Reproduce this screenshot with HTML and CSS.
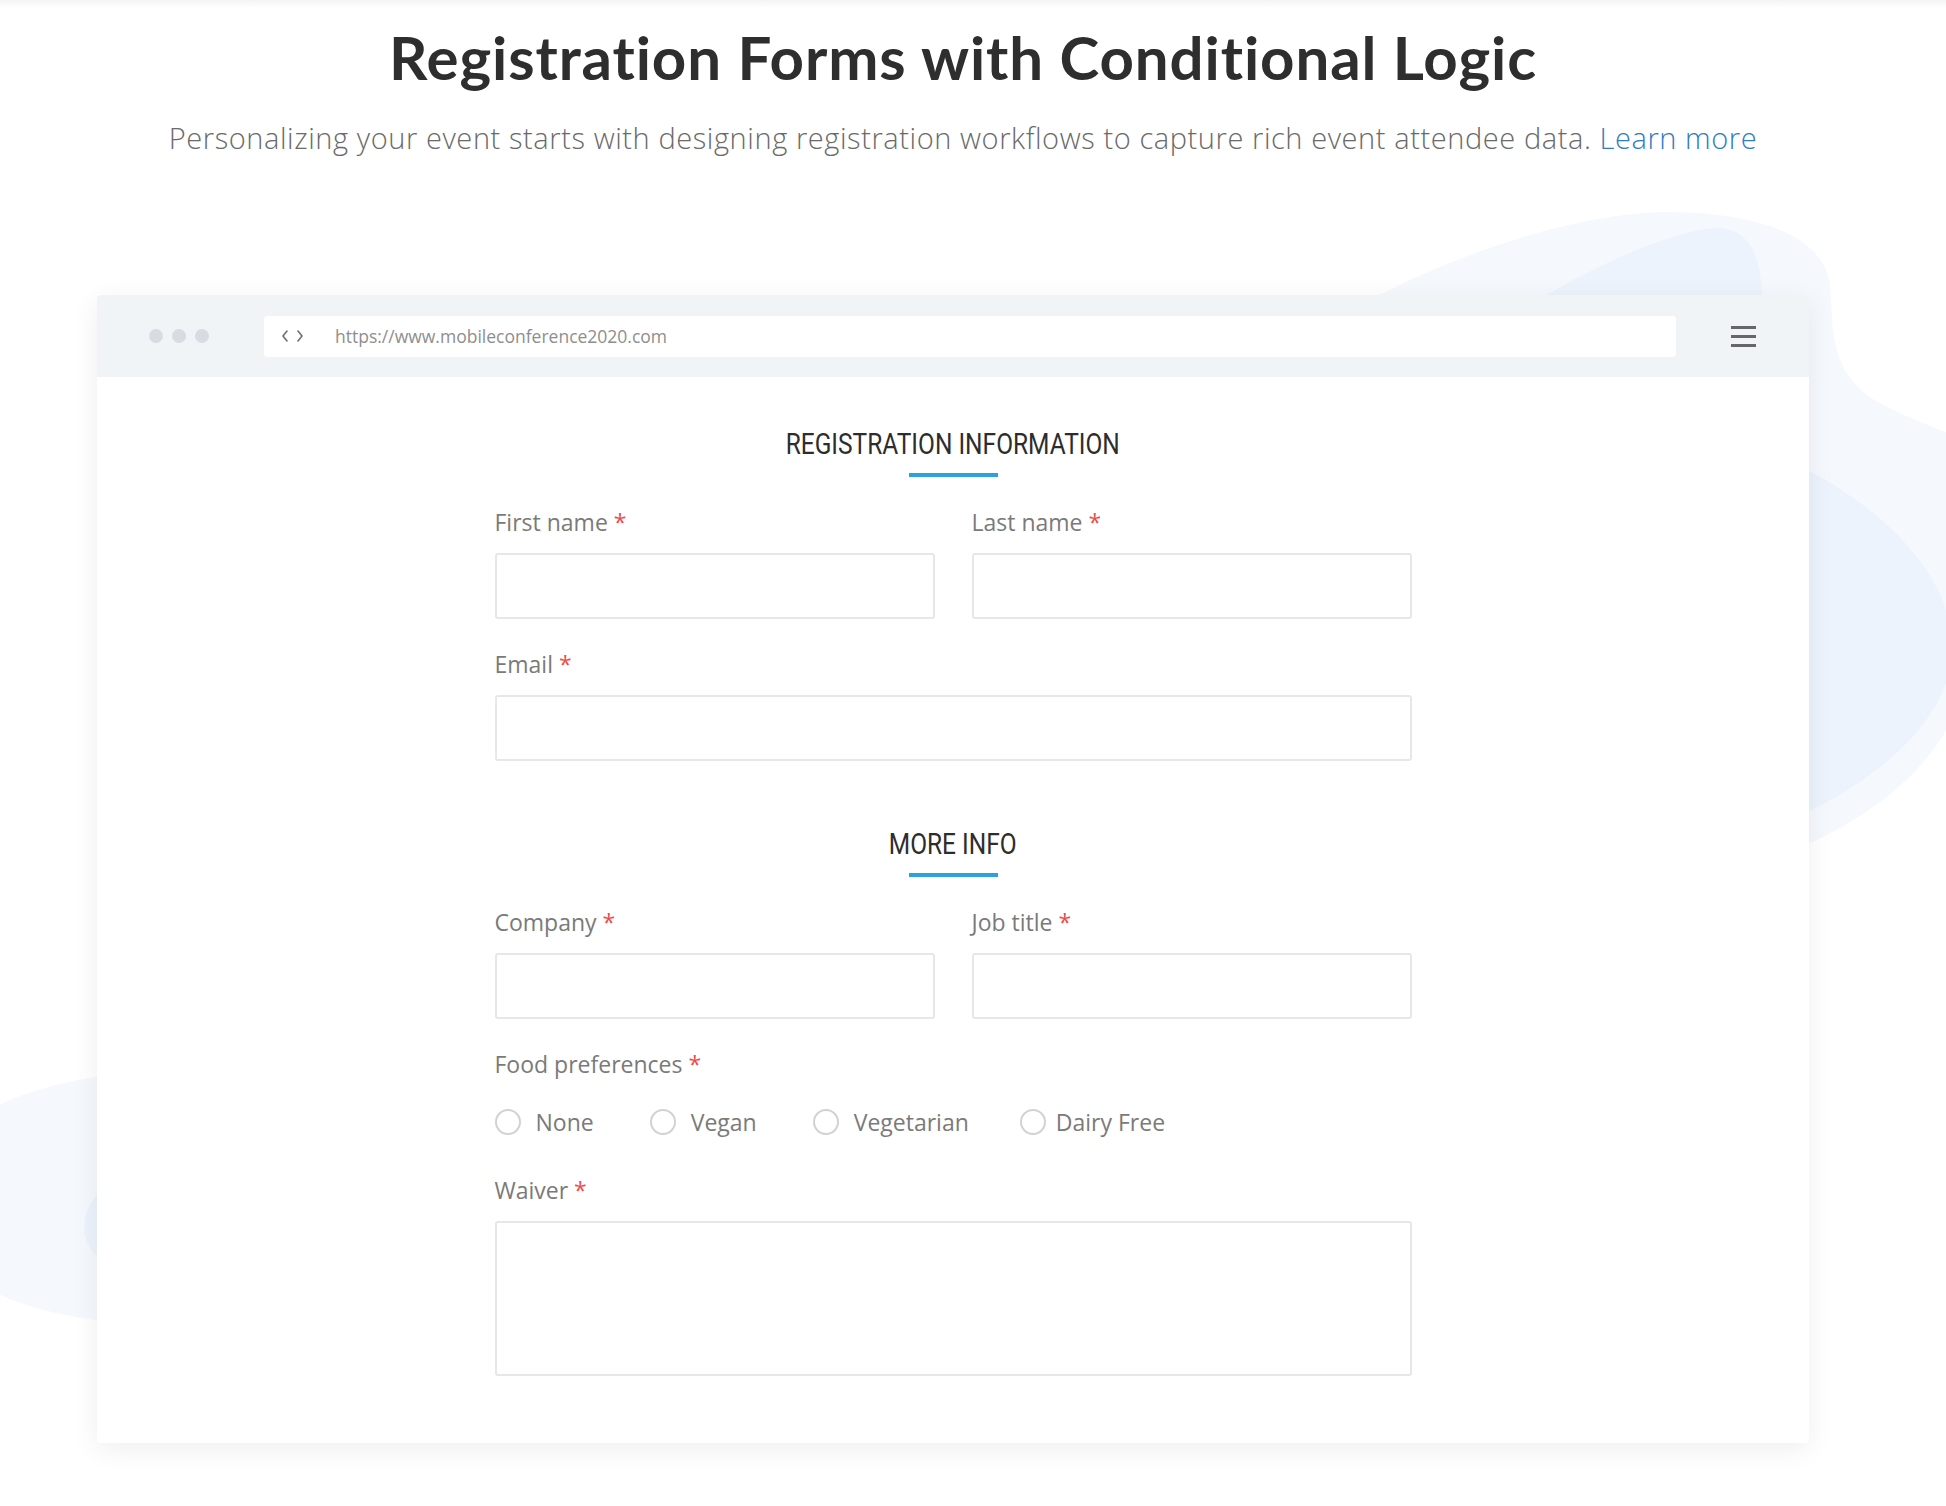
FILE: index.html
```html
<!DOCTYPE html>
<html lang="en">
<head>
<meta charset="utf-8">
<title>Registration Forms with Conditional Logic</title>
<link rel="stylesheet" href="styles.css">
</head>
<body>
<div class="page">
  <svg class="blobs" width="1946" height="1506" viewBox="0 0 1946 1506" aria-hidden="true">
    <path class="blob-outer" d="M1370 300 C1460 252 1580 212 1670 212 C1760 213 1824 236 1830 285 C1834 330 1828 372 1878 402 C1910 420 1946 430 1960 440 L1960 700 C1940 760 1880 815 1790 852 Z"/>
    <path class="blob-inner" d="M1538 300 C1600 262 1680 228 1720 228 C1752 230 1762 262 1762 300 Z"/>
    <path class="blob-inner" d="M1800 466 C1872 502 1952 568 1952 648 C1952 722 1872 782 1800 816 Z"/>
    <path class="blob-outer" d="M130 1072 C60 1080 12 1096 -10 1110 L-10 1290 C20 1305 60 1318 130 1324 Z"/>
    <path class="blob-inner" d="M120 1176 C96 1190 84 1208 84 1227 C84 1246 96 1260 120 1270 Z"/>
  </svg>

  <header class="intro">
    <h1 class="title">Registration Forms with Conditional Logic</h1>
    <p class="lead">Personalizing your event starts with designing registration workflows to capture rich event attendee data. <a class="lead-link" href="#">Learn more</a></p>
  </header>

  <div class="browser">
    <div class="browser-bar">
      <div class="dots"><span class="dot"></span><span class="dot"></span><span class="dot"></span></div>
      <div class="url">
        <svg class="nav-arrows" width="22" height="12" viewBox="0 0 22 12" aria-hidden="true">
          <path d="M5 1 L1 6 L5 11" />
          <path d="M16 1 L20 6 L16 11" />
        </svg>
        <span class="url-text">https://www.mobileconference2020.com</span>
      </div>
      <div class="menu"><span class="menu-line"></span><span class="menu-line"></span><span class="menu-line"></span></div>
    </div>

    <div class="browser-body">
      <form class="form">
        <h2 class="section-title"><span class="section-text">REGISTRATION INFORMATION</span></h2>
        <div class="rule"></div>

        <div class="row">
          <div class="field">
            <label class="label">First name <span class="req">*</span></label>
            <input class="input" type="text">
          </div>
          <div class="field">
            <label class="label">Last name <span class="req">*</span></label>
            <input class="input" type="text">
          </div>
        </div>

        <div class="field field-gap">
          <label class="label">Email <span class="req">*</span></label>
          <input class="input" type="text">
        </div>

        <h2 class="section-title section-second"><span class="section-text">MORE INFO</span></h2>
        <div class="rule"></div>

        <div class="row">
          <div class="field">
            <label class="label">Company <span class="req">*</span></label>
            <input class="input" type="text">
          </div>
          <div class="field">
            <label class="label">Job title <span class="req">*</span></label>
            <input class="input" type="text">
          </div>
        </div>

        <div class="field field-gap">
          <label class="label">Food preferences <span class="req">*</span></label>
          <div class="options">
            <label class="option"><span class="radio"></span>None</label>
            <label class="option"><span class="radio"></span>Vegan</label>
            <label class="option option-short"><span class="radio"></span>Vegetarian</label>
            <label class="option option-tight"><span class="radio"></span>Dairy Free</label>
          </div>
        </div>

        <div class="field field-waiver">
          <label class="label">Waiver <span class="req">*</span></label>
          <textarea class="input textarea"></textarea>
        </div>
      </form>
    </div>
  </div>
</div>
</body>
</html>
```
FILE: styles.css
```css
* { box-sizing: border-box; }

html, body {
  margin: 0;
  padding: 0;
}

body {
  background: linear-gradient(#f4f4f4 0, #ffffff 8px) no-repeat, #ffffff;
  font-family: "Open Sans", "Liberation Sans", sans-serif;
  color: #333;
}

.page {
  position: relative;
  width: 1946px;
  height: 1506px;
  overflow: hidden;
}

.blobs {
  position: absolute;
  left: 0;
  top: 0;
  z-index: 0;
}

.blob-outer { fill: #f5f9fe; }
.blob-inner { fill: #edf3fc; }

.intro {
  position: relative;
  z-index: 1;
  width: 1926px;
  text-align: center;
  padding-top: 22px;
}

.title {
  margin: 0;
  font-family: Lato, "Open Sans", sans-serif;
  font-weight: 700;
  font-size: 60px;
  line-height: 70px;
  color: #2e2e2e;
  letter-spacing: 0.9px;
}

.lead {
  margin: 26px 0 0;
  font-family: "Open Sans", Lato, sans-serif;
  font-weight: 300;
  font-size: 29px;
  line-height: 40px;
  color: #6a6a6a;
  letter-spacing: 0.58px;
}

.lead-link {
  color: #2f7cbf;
  text-decoration: none;
}

.browser {
  position: relative;
  z-index: 1;
  margin: 137px 0 0 97px;
  width: 1712px;
  background: #ffffff;
  border-radius: 4px;
  box-shadow: 0 6px 28px rgba(0, 0, 0, 0.07);
}

.browser-bar {
  display: flex;
  align-items: center;
  height: 82px;
  padding: 0 53px 0 52px;
  background: #f1f4f7;
  border-radius: 4px 4px 0 0;
}

.dots {
  display: flex;
  gap: 9px;
}

.dot {
  width: 14px;
  height: 14px;
  border-radius: 50%;
  background: #d7dce2;
}

.url {
  flex: 1;
  display: flex;
  align-items: center;
  height: 41px;
  margin: 0 55px;
  padding-left: 18px;
  background: #ffffff;
  border-radius: 4px;
}

.nav-arrows {
  fill: none;
  stroke: #6f6f6f;
  stroke-width: 1.6;
  stroke-linecap: round;
  stroke-linejoin: round;
}

.url-text {
  margin-left: 31px;
  font-size: 17.5px;
  color: #8e8e8e;
}

.menu {
  display: flex;
  flex-direction: column;
  gap: 6px;
  width: 25px;
}

.menu-line {
  height: 3px;
  background: #676767;
}

.browser-body {
  padding: 50px 0 67px;
}

.form {
  width: 917px;
  margin: 0 auto;
}

.section-title {
  margin: 0;
  text-align: center;
  font-family: Roboto, "Liberation Sans", sans-serif;
  font-weight: 400;
  font-size: 29px;
  line-height: 34px;
  color: #2d2d2d;
}

.section-text {
  display: inline-block;
  transform: scaleX(0.845);
  transform-origin: center;
}

.section-second {
  margin-top: 66px;
}

.rule {
  width: 89px;
  height: 4px;
  margin: 12px auto 0;
  background: #2ba2dc;
}

.row {
  display: grid;
  grid-template-columns: 1fr 1fr;
  column-gap: 37px;
  margin-top: 30px;
}

.field {
  display: flex;
  flex-direction: column;
}

.field-gap {
  margin-top: 30px;
}

.field-waiver {
  margin-top: 40px;
}

.label {
  display: block;
  font-size: 23px;
  line-height: 31px;
  color: #7a7a7a;
  margin-bottom: 15px;
}

.req {
  color: #f04a4a;
}

.input {
  display: block;
  width: 100%;
  height: 66px;
  margin: 0;
  border: 2px solid #e7e7e7;
  border-radius: 3px;
  background: #ffffff;
  font: inherit;
  outline: none;
}

.textarea {
  height: 155px;
  resize: none;
}

.options {
  display: flex;
  align-items: center;
  height: 26px;
  margin-top: 14px;
}

.option {
  display: flex;
  align-items: center;
  gap: 15px;
  margin-right: 56px;
  font-size: 23px;
  line-height: 26px;
  color: #7a7a7a;
}

.option-short {
  margin-right: 51px;
}

.option-tight {
  gap: 10px;
}

.radio {
  width: 26px;
  height: 26px;
  border: 2px solid #d2d2d2;
  border-radius: 50%;
  background: #ffffff;
}
```
